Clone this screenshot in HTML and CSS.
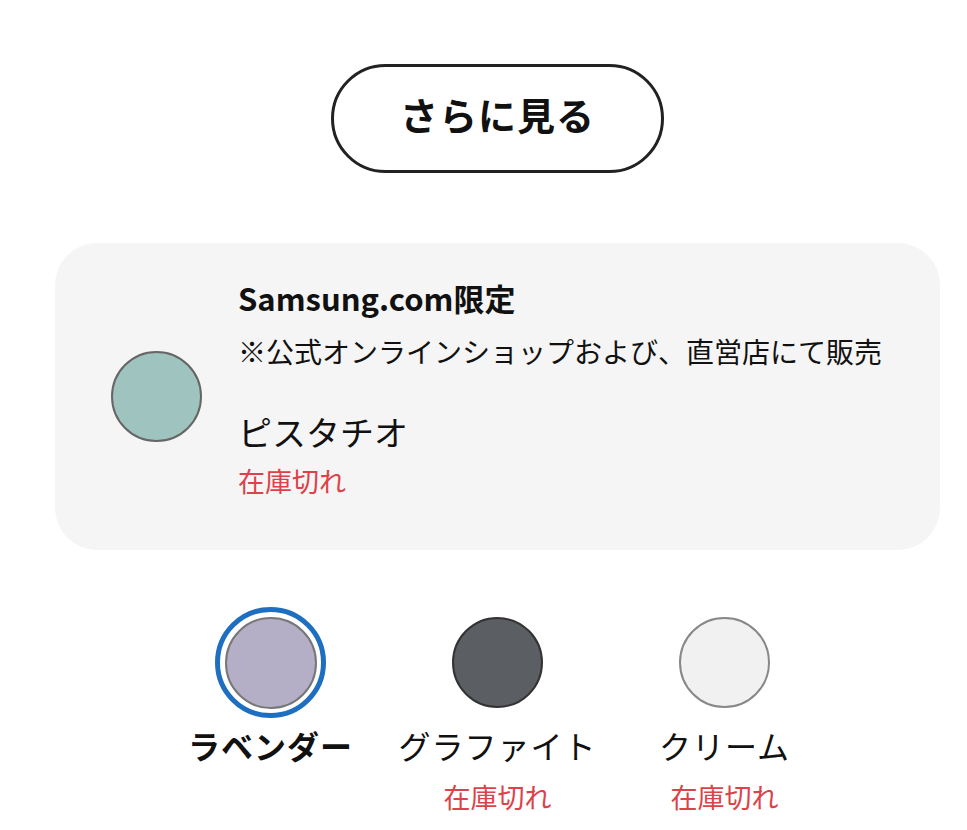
FILE: index.html
```html
<!DOCTYPE html>
<html lang="ja">
<head>
    <meta charset="UTF-8">
    <meta name="viewport" content="width=device-width, initial-scale=1.0">
    <title>カラー選択</title>
    <link rel="stylesheet" href="styles.css">
</head>
<body>
    <div class="wrapper">
        <button class="more-btn">さらに見る</button>

        <!-- 限定カラー -->
        <div class="limited-card">
            <span class="swatch pistachio"></span>
            <div class="limited-info">
                <p class="limited-title">Samsung.com限定</p>
                <p class="limited-note">※公式オンラインショップおよび、直営店にて販売</p>
                <p class="limited-name">ピスタチオ</p>
                <p class="stock">在庫切れ</p>
            </div>
        </div>

        <!-- カラー一覧 -->
        <div class="color-row">
            <div class="color-item">
                <div class="swatch-box selected">
                    <span class="swatch lavender"></span>
                </div>
                <p class="color-name active">ラベンダー</p>
            </div>
            <div class="color-item">
                <div class="swatch-box">
                    <span class="swatch graphite"></span>
                </div>
                <p class="color-name">グラファイト</p>
                <p class="stock">在庫切れ</p>
            </div>
            <div class="color-item">
                <div class="swatch-box">
                    <span class="swatch cream"></span>
                </div>
                <p class="color-name">クリーム</p>
                <p class="stock">在庫切れ</p>
            </div>
        </div>
    </div>
</body>
</html>
```

FILE: styles.css
```css
* {
    margin: 0;
    padding: 0;
    box-sizing: border-box;
}

body {
    font-family: "Noto Sans CJK JP", "Noto Sans", sans-serif;
    background-color: #fff;
    color: #111;
}

.wrapper {
    width: 885px;
    margin-left: 55px;
    display: flex;
    flex-direction: column;
    align-items: center;
}

.more-btn {
    margin-top: 64px;
    width: 333px;
    height: 109px;
    padding-bottom: 10px;
    border: 3px solid #222;
    border-radius: 55px;
    background-color: #fff;
    font-family: inherit;
    font-size: 38px;
    font-weight: 700;
    color: #111;
    letter-spacing: 1px;
}

.limited-card {
    margin-top: 70px;
    width: 100%;
    height: 307px;
    background-color: #f5f5f5;
    border-radius: 42px;
    display: flex;
    align-items: center;
    padding-left: 56px;
    gap: 36px;
}

.limited-info {
    margin-bottom: 16px;
}

.limited-title {
    font-size: 31px;
    font-weight: 700;
    line-height: 40px;
}

.limited-note {
    margin-top: 13px;
    font-size: 28px;
    line-height: 40px;
}

.limited-name {
    margin-top: 39px;
    font-size: 34px;
    line-height: 44px;
}

.stock {
    color: #dc4249;
    font-size: 27px;
    line-height: 36px;
}

.limited-info .stock {
    margin-top: 9px;
}

.swatch {
    display: block;
    width: 91px;
    height: 91px;
    border-radius: 50%;
    border: 2px solid #666;
    flex-shrink: 0;
}

.pistachio {
    background-color: #9fc4c0;
}

.lavender {
    width: 92px;
    height: 92px;
    background-color: #b4afc7;
    border-color: #777;
}

.graphite {
    background-color: #5b5e63;
    border-color: #333;
}

.cream {
    background-color: #f1f1f1;
    border-color: #888;
}

.color-row {
    margin-top: 57px;
    display: flex;
    justify-content: center;
}

.color-item {
    width: 227px;
    display: flex;
    flex-direction: column;
    align-items: center;
}

.swatch-box {
    width: 111px;
    height: 111px;
    border-radius: 50%;
    display: flex;
    align-items: center;
    justify-content: center;
}

.swatch-box.selected {
    border: 5px solid #1e6fc0;
}

.color-name {
    margin-top: 5px;
    font-size: 32px;
    line-height: 44px;
    letter-spacing: 1px;
    white-space: nowrap;
}

.color-name.active {
    font-weight: 700;
}

.color-item .stock {
    margin-top: 12px;
}
```
